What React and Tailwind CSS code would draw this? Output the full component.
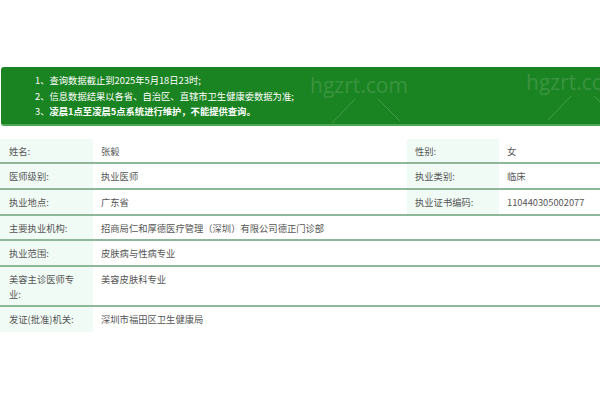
const notes = [
  '查询数据截止到2025年5月18日23时;',
  '信息数据结果以各省、自治区、直辖市卫生健康委数据为准;',
  '凌晨1点至凌晨5点系统进行维护，不能提供查询。',
]

const pairs = [
  { h: 'h-[25px]', a: ['姓名:', '张毅'], b: ['性别:', '女'] },
  { h: 'h-[26px]', a: ['医师级别:', '执业医师'], b: ['执业类别:', '临床'] },
  { h: 'h-[26px]', a: ['执业地点:', '广东省'], b: ['执业证书编码:', '110440305002077'] },
]

const wide = [
  { h: 'h-[25px]', label: '主要执业机构:', value: '招商局仁和厚德医疗管理（深圳）有限公司德正门诊部', line: true },
  { h: 'h-[26px]', label: '执业范围:', value: '皮肤病与性病专业', line: true },
  { h: 'h-[40px]', label: '美容主诊医师专业:', value: '美容皮肤科专业', line: true },
  { h: 'h-[25px]', label: '发证(批准)机关:', value: '深圳市福田区卫生健康局', line: false },
]

function Mark({ className }) {
  return (
    <div className={`absolute pointer-events-none ${className}`}>
      <div className="text-[21px] leading-none whitespace-nowrap text-white/15 font-['Open_Sans',sans-serif]">hgzrt.com</div>
      <svg width="90" height="26" className="mt-[2px]">
        <line x1="45" y1="1" x2="22" y2="25" stroke="rgba(255,255,255,0.18)" strokeWidth="1" />
        <line x1="68" y1="1" x2="92" y2="25" stroke="rgba(255,255,255,0.18)" strokeWidth="1" />
      </svg>
    </div>
  )
}

export default function App() {
  return (
    <div className="w-[600px] h-[400px] bg-white pt-[67px] text-[9.3px] text-[#555] font-['Microsoft_YaHei','Noto_Sans_CJK_SC',sans-serif] overflow-hidden">
      {/* notice banner */}
      <div className="relative ml-[1px] h-[59px] rounded-l-[3px] bg-[#1b8422] border-b-2 border-[#4fa654] pt-[6px] pl-[34px] text-white overflow-hidden">
        {notes.map((n, i) => (
          <div key={i} className="flex leading-[15.5px]">
            <span className="shrink-0">{i + 1}、</span>
            <span className={i === 2 ? 'font-bold' : ''}>{n}</span>
          </div>
        ))}
        <Mark className="left-[309px] top-[8px]" />
        <Mark className="left-[525px] top-[5px]" />
      </div>

      {/* detail table */}
      <div className="mt-[13px]">
        {pairs.map((r, i) => (
          <div key={i} className={`grid grid-cols-[93px_314px_92px_1fr] ${r.h} border-b-2 border-[#8fb89a]`}>
            <div className="bg-[#f1fbf5] pl-[9px] pt-[5px] leading-[15px]">{r.a[0]}</div>
            <div className="pl-[8px] pt-[5px] leading-[15px]">{r.a[1]}</div>
            <div className="bg-[#f1fbf5] pl-[8px] pt-[5px] leading-[15px]">{r.b[0]}</div>
            <div className="pl-[8px] pt-[5px] leading-[15px]">{r.b[1]}</div>
          </div>
        ))}
        {wide.map((r, i) => (
          <div key={i} className={`grid grid-cols-[93px_1fr] ${r.h} ${r.line ? 'border-b-2 border-[#8fb89a]' : ''}`}>
            <div className="bg-[#f1fbf5] pl-[9px] pr-[12px] pt-[5px] leading-[15px]">{r.label}</div>
            <div className="pl-[8px] pt-[5px] leading-[15px]">{r.value}</div>
          </div>
        ))}
      </div>
    </div>
  )
}
